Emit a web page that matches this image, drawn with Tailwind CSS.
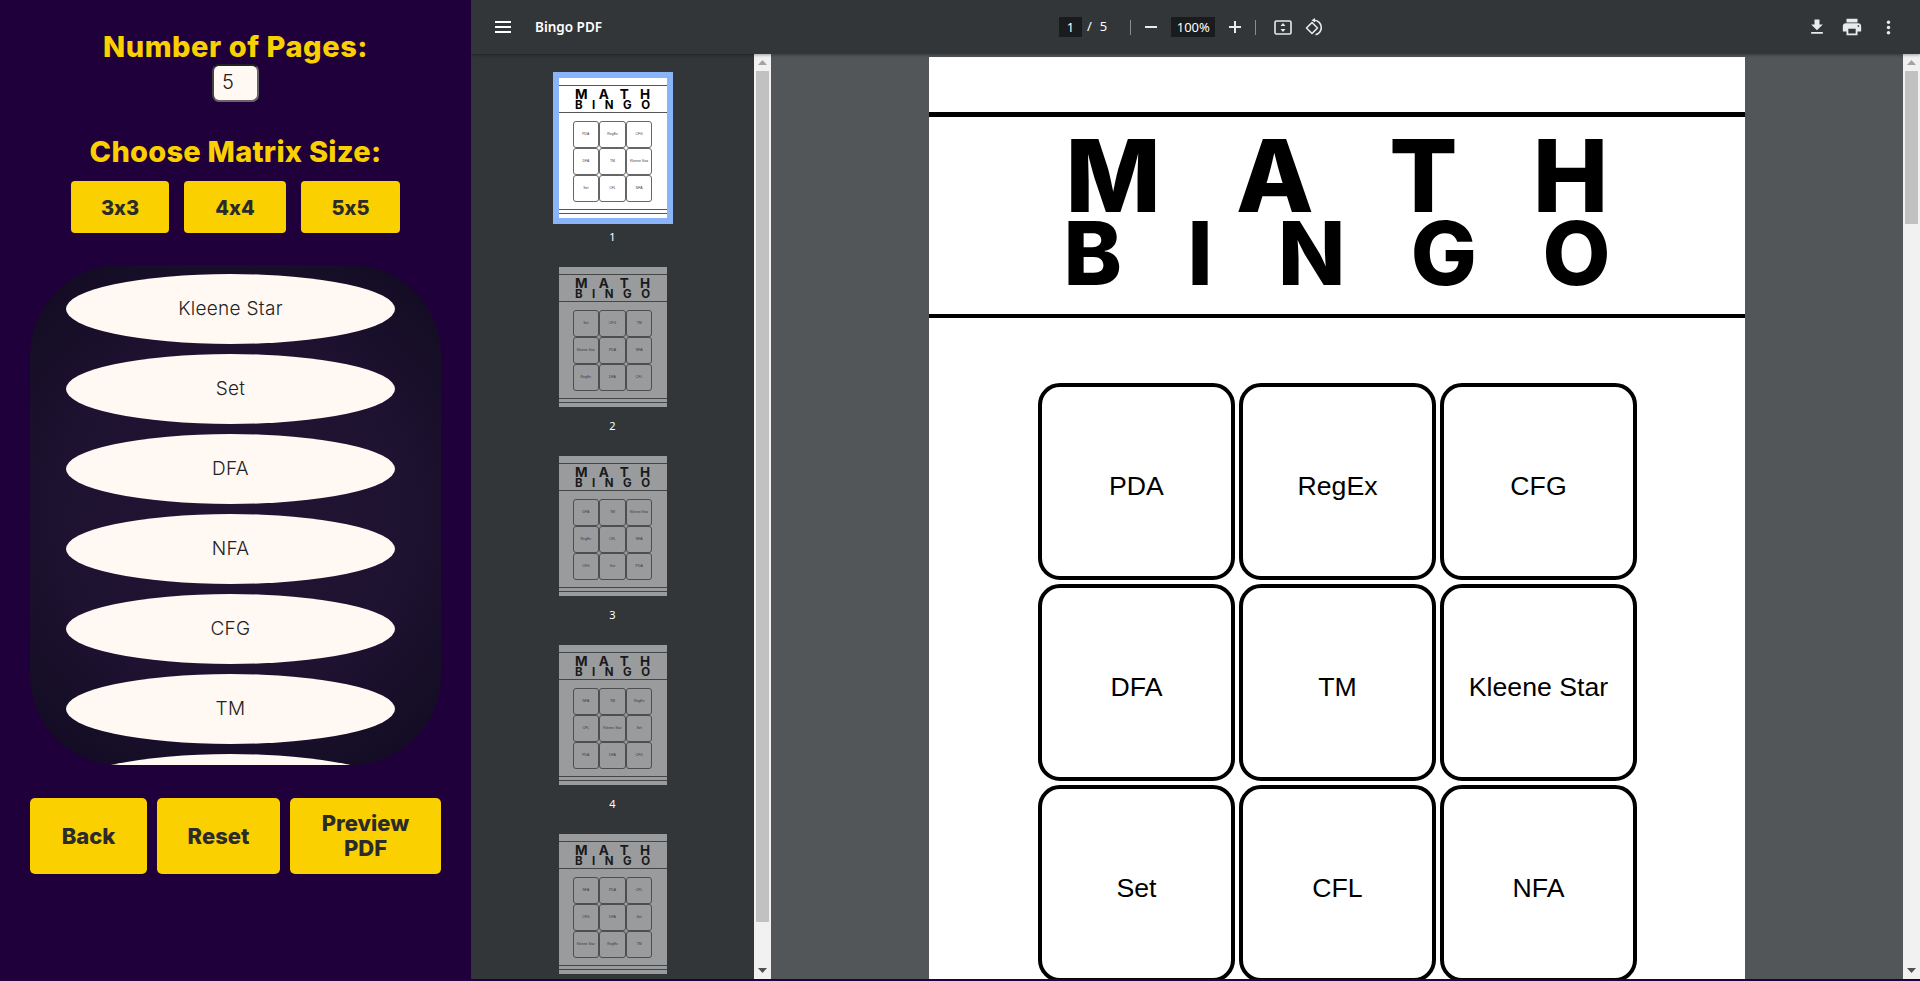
<!doctype html>
<html lang="en">
  <head>
    <meta charset="UTF-8" />
    <title>Bingo PDF</title>
    <script src="https://cdn.jsdelivr.net/npm/@tailwindcss/browser@4"></script>
  </head>
  <body class="w-screen h-screen overflow-hidden bg-[#1f003b] font-['Inter',sans-serif]">
    <div class="flex w-[1920px] h-[981px]">
      <!-- controls -->
      <aside class="w-[471px] shrink-0 flex flex-col items-center pt-[30px]">
        <h2 class="text-[29px] leading-[34px] font-extrabold tracking-[0.55px] text-[#fad000]">Number of Pages:</h2>
        <div class="w-[47px] h-[38px] rounded-[7px] border-2 border-t-[#222] border-l-[#444] border-r-[#666] border-b-[#666] bg-[#fff8f3] pl-[8px] text-[20px] leading-[32px] font-light text-[#222]">5</div>
        <h2 class="mt-[33px] text-[29px] leading-[34px] font-extrabold tracking-[0.25px] text-[#fad000]">Choose Matrix Size:</h2>
        <div class="mt-[12px] flex gap-[15px]">
          <button class="w-[98px] h-[52px] pt-[2px] rounded-[4px] bg-[#fad000] text-[20px] font-extrabold text-[#2b2b2b] [font-feature-settings:'calt'_0]">3x3</button>
          <button class="w-[102px] h-[52px] pt-[2px] rounded-[4px] bg-[#fad000] text-[20px] font-extrabold text-[#2b2b2b] [font-feature-settings:'calt'_0]">4x4</button>
          <button class="w-[99px] h-[52px] pt-[2px] rounded-[4px] bg-[#fad000] text-[20px] font-extrabold text-[#2b2b2b] [font-feature-settings:'calt'_0]">5x5</button>
        </div>
        <div class="mt-[32px] w-[411px] h-[500px] overflow-hidden rounded-[90px] bg-[radial-gradient(circle,#211533_0%,#1d1230_55%,#110a20_100%)] flex flex-col items-center gap-[10px] pt-[9px] pr-[10px]">
          <div class="w-[329px] h-[70px] shrink-0 rounded-[50%] bg-[#fff8f3] flex items-center justify-center text-[19px] font-light tracking-[0.3px] text-[#222]">Kleene Star</div>
          <div class="w-[329px] h-[70px] shrink-0 rounded-[50%] bg-[#fff8f3] flex items-center justify-center text-[19px] font-light tracking-[0.3px] text-[#222]">Set</div>
          <div class="w-[329px] h-[70px] shrink-0 rounded-[50%] bg-[#fff8f3] flex items-center justify-center text-[19px] font-light tracking-[0.3px] text-[#222]">DFA</div>
          <div class="w-[329px] h-[70px] shrink-0 rounded-[50%] bg-[#fff8f3] flex items-center justify-center text-[19px] font-light tracking-[0.3px] text-[#222]">NFA</div>
          <div class="w-[329px] h-[70px] shrink-0 rounded-[50%] bg-[#fff8f3] flex items-center justify-center text-[19px] font-light tracking-[0.3px] text-[#222]">CFG</div>
          <div class="w-[329px] h-[70px] shrink-0 rounded-[50%] bg-[#fff8f3] flex items-center justify-center text-[19px] font-light tracking-[0.3px] text-[#222]">TM</div>
          <div class="w-[329px] h-[70px] shrink-0 rounded-[50%] bg-[#fff8f3]"></div>
        </div>
        <div class="mt-[33px] flex gap-[10px]">
          <button class="w-[117px] h-[76px] rounded-[5px] bg-[#fad000] text-[22px] leading-[25px] font-extrabold text-[#2b2b2b]">Back</button>
          <button class="w-[123px] h-[76px] rounded-[5px] bg-[#fad000] text-[22px] leading-[25px] font-extrabold text-[#2b2b2b]">Reset</button>
          <button class="w-[151px] h-[76px] rounded-[5px] bg-[#fad000] text-[22px] leading-[25px] font-extrabold text-[#2b2b2b]">Preview<br />PDF</button>
        </div>
      </aside>

      <!-- pdf viewer -->
      <section class="flex-1 h-[979px] flex flex-col bg-[#525659] overflow-hidden">
        <header class="relative z-10 h-[54px] shrink-0 bg-[#323639] shadow-[0_1px_3px_rgba(0,0,0,0.35)] flex items-center text-white font-['Noto_Sans',sans-serif]">
          <div class="w-[588px] shrink-0 flex items-center pl-[24px]">
            <svg width="16" height="12" viewBox="0 0 16 12" fill="#fff"><rect width="16" height="2" /><rect y="5" width="16" height="2" /><rect y="10" width="16" height="2" /></svg>
            <span class="ml-[24px] text-[13.5px] font-semibold">Bingo PDF</span>
          </div>
          <div class="flex items-center text-[13px]">
            <span class="w-[23px] h-[20px] bg-[#191b1c] text-center leading-[20px]">1</span>
            <span class="ml-[5px]">/</span>
            <span class="ml-[8px]">5</span>
            <span class="ml-[23px] w-px h-[15px] bg-[#8a8d8f]"></span>
            <svg class="ml-[14px]" width="12" height="2" viewBox="0 0 12 2" fill="#e8eaed"><rect width="12" height="2" /></svg>
            <span class="ml-[14px] w-[44px] h-[20px] bg-[#191b1c] text-center leading-[20px]">100%</span>
            <svg class="ml-[14px]" width="12" height="12" viewBox="0 0 12 12" fill="#e8eaed"><rect y="5" width="12" height="2" /><rect x="5" width="2" height="12" /></svg>
            <span class="ml-[14px] w-px h-[15px] bg-[#8a8d8f]"></span>
            <svg class="ml-[18px]" width="18" height="15" viewBox="0 0 18 15"><rect x="1" y="1" width="16" height="13" rx="1.5" fill="none" stroke="#e8eaed" stroke-width="1.6" /><path d="M9 3 L11.5 6 H6.5 Z M9 12 L6.5 9 H11.5 Z" fill="#e8eaed" /></svg>
            <svg class="ml-[13px]" width="19" height="18" viewBox="0 0 19 18" fill="none"><path d="M1.5 10 L7 4.5 L12.5 10 L7 15.5 Z" stroke="#e8eaed" stroke-width="1.6" stroke-linejoin="round" /><path d="M9.5 2.2 A7.4 7.4 0 0 1 10.5 16.8" stroke="#e8eaed" stroke-width="1.6" /><path d="M6.5 2.2 L10 0 V4.4 Z" fill="#e8eaed" /></svg>
          </div>
          <div class="ml-auto flex items-center">
            <svg width="20" height="20" viewBox="0 0 24 24" fill="#e8eaed"><path d="M19 9h-4V3H9v6H5l7 7 7-7zM5 18v2h14v-2H5z" /></svg>
            <svg class="ml-[14px]" width="22" height="22" viewBox="0 0 24 24" fill="#e8eaed"><path d="M19 8H5c-1.66 0-3 1.34-3 3v6h4v4h12v-4h4v-6c0-1.66-1.34-3-3-3zm-3 11H8v-5h8v5zm3-7c-.55 0-1-.45-1-1s.45-1 1-1 1 .45 1 1-.45 1-1 1zm-1-9H6v4h12V3z" /></svg>
            <svg class="ml-[15px] mr-[21px]" width="21" height="21" viewBox="0 0 24 24" fill="#e8eaed"><path d="M12 8c1.1 0 2-.9 2-2s-.9-2-2-2-2 .9-2 2 .9 2 2 2zm0 2c-1.1 0-2 .9-2 2s.9 2 2 2 2-.9 2-2-.9-2-2-2zm0 6c-1.1 0-2 .9-2 2s.9 2 2 2 2-.9 2-2-.9-2-2-2z" /></svg>
          </div>
        </header>

        <div class="flex flex-1 min-h-0">
          <!-- thumbnails -->
          <nav class="w-[283px] shrink-0 bg-[#323639] overflow-hidden flex flex-col items-center pt-[18px] gap-[16px] text-white font-['Noto_Sans',sans-serif]">
            <div class="flex flex-col items-center">
              <div class="w-[120px] h-[152px] border-[6px] border-[#8ab4f8]">
                <div class="w-[108px] h-[140px] bg-white pt-[7px]">
                  <div class="h-[28px] border-y border-[#555] flex flex-col items-center justify-center pt-[1px] font-['Inter',sans-serif] font-bold text-black">
                    <div class="w-[75px] flex justify-between text-[13.5px] leading-[11px]"><span>M</span><span>A</span><span>T</span><span>H</span></div>
                    <div class="w-[75px] flex justify-between text-[11.5px] leading-[10px]"><span>B</span><span>I</span><span>N</span><span>G</span><span>O</span></div>
                  </div>
                  <div class="mt-[8px] mx-auto w-[80px] grid grid-cols-3 font-['Liberation_Sans',sans-serif] text-[3.5px] text-[#444]">
                    <div class="h-[27px] border border-[#666] rounded-[3px] flex items-center justify-center">PDA</div><div class="h-[27px] border border-[#666] rounded-[3px] flex items-center justify-center">RegEx</div><div class="h-[27px] border border-[#666] rounded-[3px] flex items-center justify-center">CFG</div>
                    <div class="h-[27px] border border-[#666] rounded-[3px] flex items-center justify-center">DFA</div><div class="h-[27px] border border-[#666] rounded-[3px] flex items-center justify-center">TM</div><div class="h-[27px] border border-[#666] rounded-[3px] flex items-center justify-center">Kleene Star</div>
                    <div class="h-[27px] border border-[#666] rounded-[3px] flex items-center justify-center">Set</div><div class="h-[27px] border border-[#666] rounded-[3px] flex items-center justify-center">CFL</div><div class="h-[27px] border border-[#666] rounded-[3px] flex items-center justify-center">NFA</div>
                  </div>
                  <div class="mt-[7px] h-[5px] border-y border-[#555]"></div>
                </div>
              </div>
              <div class="mt-[5px] h-[16px] text-[11px] leading-[16px]">1</div>
            </div>

            <div class="flex flex-col items-center">
              <div class="w-[120px] h-[152px] border-[6px] border-transparent">
                <div class="w-[108px] h-[140px] bg-white pt-[7px] opacity-50">
                  <div class="h-[28px] border-y border-[#555] flex flex-col items-center justify-center pt-[1px] font-['Inter',sans-serif] font-bold text-black">
                    <div class="w-[75px] flex justify-between text-[13.5px] leading-[11px]"><span>M</span><span>A</span><span>T</span><span>H</span></div>
                    <div class="w-[75px] flex justify-between text-[11.5px] leading-[10px]"><span>B</span><span>I</span><span>N</span><span>G</span><span>O</span></div>
                  </div>
                  <div class="mt-[8px] mx-auto w-[80px] grid grid-cols-3 font-['Liberation_Sans',sans-serif] text-[3.5px] text-[#444]">
                    <div class="h-[27px] border border-[#666] rounded-[3px] flex items-center justify-center">Set</div><div class="h-[27px] border border-[#666] rounded-[3px] flex items-center justify-center">CFG</div><div class="h-[27px] border border-[#666] rounded-[3px] flex items-center justify-center">TM</div>
                    <div class="h-[27px] border border-[#666] rounded-[3px] flex items-center justify-center">Kleene Star</div><div class="h-[27px] border border-[#666] rounded-[3px] flex items-center justify-center">PDA</div><div class="h-[27px] border border-[#666] rounded-[3px] flex items-center justify-center">NFA</div>
                    <div class="h-[27px] border border-[#666] rounded-[3px] flex items-center justify-center">RegEx</div><div class="h-[27px] border border-[#666] rounded-[3px] flex items-center justify-center">DFA</div><div class="h-[27px] border border-[#666] rounded-[3px] flex items-center justify-center">CFL</div>
                  </div>
                  <div class="mt-[7px] h-[5px] border-y border-[#555]"></div>
                </div>
              </div>
              <div class="mt-[5px] h-[16px] text-[11px] leading-[16px]">2</div>
            </div>

            <div class="flex flex-col items-center">
              <div class="w-[120px] h-[152px] border-[6px] border-transparent">
                <div class="w-[108px] h-[140px] bg-white pt-[7px] opacity-50">
                  <div class="h-[28px] border-y border-[#555] flex flex-col items-center justify-center pt-[1px] font-['Inter',sans-serif] font-bold text-black">
                    <div class="w-[75px] flex justify-between text-[13.5px] leading-[11px]"><span>M</span><span>A</span><span>T</span><span>H</span></div>
                    <div class="w-[75px] flex justify-between text-[11.5px] leading-[10px]"><span>B</span><span>I</span><span>N</span><span>G</span><span>O</span></div>
                  </div>
                  <div class="mt-[8px] mx-auto w-[80px] grid grid-cols-3 font-['Liberation_Sans',sans-serif] text-[3.5px] text-[#444]">
                    <div class="h-[27px] border border-[#666] rounded-[3px] flex items-center justify-center">DFA</div><div class="h-[27px] border border-[#666] rounded-[3px] flex items-center justify-center">TM</div><div class="h-[27px] border border-[#666] rounded-[3px] flex items-center justify-center">Kleene Star</div>
                    <div class="h-[27px] border border-[#666] rounded-[3px] flex items-center justify-center">RegEx</div><div class="h-[27px] border border-[#666] rounded-[3px] flex items-center justify-center">CFL</div><div class="h-[27px] border border-[#666] rounded-[3px] flex items-center justify-center">NFA</div>
                    <div class="h-[27px] border border-[#666] rounded-[3px] flex items-center justify-center">CFG</div><div class="h-[27px] border border-[#666] rounded-[3px] flex items-center justify-center">Set</div><div class="h-[27px] border border-[#666] rounded-[3px] flex items-center justify-center">PDA</div>
                  </div>
                  <div class="mt-[7px] h-[5px] border-y border-[#555]"></div>
                </div>
              </div>
              <div class="mt-[5px] h-[16px] text-[11px] leading-[16px]">3</div>
            </div>

            <div class="flex flex-col items-center">
              <div class="w-[120px] h-[152px] border-[6px] border-transparent">
                <div class="w-[108px] h-[140px] bg-white pt-[7px] opacity-50">
                  <div class="h-[28px] border-y border-[#555] flex flex-col items-center justify-center pt-[1px] font-['Inter',sans-serif] font-bold text-black">
                    <div class="w-[75px] flex justify-between text-[13.5px] leading-[11px]"><span>M</span><span>A</span><span>T</span><span>H</span></div>
                    <div class="w-[75px] flex justify-between text-[11.5px] leading-[10px]"><span>B</span><span>I</span><span>N</span><span>G</span><span>O</span></div>
                  </div>
                  <div class="mt-[8px] mx-auto w-[80px] grid grid-cols-3 font-['Liberation_Sans',sans-serif] text-[3.5px] text-[#444]">
                    <div class="h-[27px] border border-[#666] rounded-[3px] flex items-center justify-center">NFA</div><div class="h-[27px] border border-[#666] rounded-[3px] flex items-center justify-center">TM</div><div class="h-[27px] border border-[#666] rounded-[3px] flex items-center justify-center">RegEx</div>
                    <div class="h-[27px] border border-[#666] rounded-[3px] flex items-center justify-center">CFL</div><div class="h-[27px] border border-[#666] rounded-[3px] flex items-center justify-center">Kleene Star</div><div class="h-[27px] border border-[#666] rounded-[3px] flex items-center justify-center">Set</div>
                    <div class="h-[27px] border border-[#666] rounded-[3px] flex items-center justify-center">PDA</div><div class="h-[27px] border border-[#666] rounded-[3px] flex items-center justify-center">DFA</div><div class="h-[27px] border border-[#666] rounded-[3px] flex items-center justify-center">CFG</div>
                  </div>
                  <div class="mt-[7px] h-[5px] border-y border-[#555]"></div>
                </div>
              </div>
              <div class="mt-[5px] h-[16px] text-[11px] leading-[16px]">4</div>
            </div>

            <div class="flex flex-col items-center">
              <div class="w-[120px] h-[152px] border-[6px] border-transparent">
                <div class="w-[108px] h-[140px] bg-white pt-[7px] opacity-50">
                  <div class="h-[28px] border-y border-[#555] flex flex-col items-center justify-center pt-[1px] font-['Inter',sans-serif] font-bold text-black">
                    <div class="w-[75px] flex justify-between text-[13.5px] leading-[11px]"><span>M</span><span>A</span><span>T</span><span>H</span></div>
                    <div class="w-[75px] flex justify-between text-[11.5px] leading-[10px]"><span>B</span><span>I</span><span>N</span><span>G</span><span>O</span></div>
                  </div>
                  <div class="mt-[8px] mx-auto w-[80px] grid grid-cols-3 font-['Liberation_Sans',sans-serif] text-[3.5px] text-[#444]">
                    <div class="h-[27px] border border-[#666] rounded-[3px] flex items-center justify-center">NFA</div><div class="h-[27px] border border-[#666] rounded-[3px] flex items-center justify-center">PDA</div><div class="h-[27px] border border-[#666] rounded-[3px] flex items-center justify-center">CFL</div>
                    <div class="h-[27px] border border-[#666] rounded-[3px] flex items-center justify-center">CFG</div><div class="h-[27px] border border-[#666] rounded-[3px] flex items-center justify-center">DFA</div><div class="h-[27px] border border-[#666] rounded-[3px] flex items-center justify-center">Set</div>
                    <div class="h-[27px] border border-[#666] rounded-[3px] flex items-center justify-center">Kleene Star</div><div class="h-[27px] border border-[#666] rounded-[3px] flex items-center justify-center">RegEx</div><div class="h-[27px] border border-[#666] rounded-[3px] flex items-center justify-center">TM</div>
                  </div>
                  <div class="mt-[7px] h-[5px] border-y border-[#555]"></div>
                </div>
              </div>
            </div>
          </nav>

          <!-- sidebar scrollbar -->
          <div class="w-[17px] shrink-0 bg-[#f1f1f1] flex flex-col items-center">
            <div class="h-[17px] flex items-center justify-center"><svg width="9" height="5" viewBox="0 0 9 5" fill="#a3a3a3"><path d="M4.5 0 L9 5 H0 Z" /></svg></div>
            <div class="w-[13px] h-[851px] bg-[#c1c1c1]"></div>
            <div class="mt-auto h-[17px] flex items-center justify-center"><svg width="9" height="5" viewBox="0 0 9 5" fill="#505050"><path d="M0 0 H9 L4.5 5 Z" /></svg></div>
          </div>

          <!-- page -->
          <main class="flex-1 min-w-0 overflow-hidden flex justify-center pt-[3px]">
            <div class="w-[816px] h-[1056px] shrink-0 bg-white pt-[55px] font-['Inter',sans-serif] text-black">
              <div class="h-[206px] border-t-[5px] border-b-[4px] border-black flex flex-col items-center pt-[17px]">
                <div class="w-[543px] h-[83px] flex justify-between items-center text-[101px] font-extrabold leading-[83px]"><span>M</span><span>A</span><span>T</span><span>H</span></div>
                <div class="w-[547px] h-[72px] flex justify-between items-center text-[88px] font-extrabold leading-[72px]"><span>B</span><span>I</span><span>N</span><span>G</span><span>O</span></div>
              </div>
              <div class="mt-[65px] ml-[109px] w-[599px] grid grid-cols-3 gap-[4px] font-['Liberation_Sans',sans-serif] text-[26.67px]">
                <div class="h-[197px] pt-[8px] border-4 border-black rounded-[22px] flex items-center justify-center">PDA</div>
                <div class="h-[197px] pt-[8px] border-4 border-black rounded-[22px] flex items-center justify-center">RegEx</div>
                <div class="h-[197px] pt-[8px] border-4 border-black rounded-[22px] flex items-center justify-center">CFG</div>
                <div class="h-[197px] pt-[8px] border-4 border-black rounded-[22px] flex items-center justify-center">DFA</div>
                <div class="h-[197px] pt-[8px] border-4 border-black rounded-[22px] flex items-center justify-center">TM</div>
                <div class="h-[197px] pt-[8px] border-4 border-black rounded-[22px] flex items-center justify-center">Kleene Star</div>
                <div class="h-[197px] pt-[8px] border-4 border-black rounded-[22px] flex items-center justify-center">Set</div>
                <div class="h-[197px] pt-[8px] border-4 border-black rounded-[22px] flex items-center justify-center">CFL</div>
                <div class="h-[197px] pt-[8px] border-4 border-black rounded-[22px] flex items-center justify-center">NFA</div>
              </div>
            </div>
          </main>

          <!-- page scrollbar -->
          <div class="w-[17px] shrink-0 bg-[#f1f1f1] flex flex-col items-center">
            <div class="h-[17px] flex items-center justify-center"><svg width="9" height="5" viewBox="0 0 9 5" fill="#a3a3a3"><path d="M4.5 0 L9 5 H0 Z" /></svg></div>
            <div class="w-[13px] h-[153px] bg-[#c1c1c1]"></div>
            <div class="mt-auto h-[17px] flex items-center justify-center"><svg width="9" height="5" viewBox="0 0 9 5" fill="#505050"><path d="M0 0 H9 L4.5 5 Z" /></svg></div>
          </div>
        </div>
      </section>
    </div>
  </body>
</html>
